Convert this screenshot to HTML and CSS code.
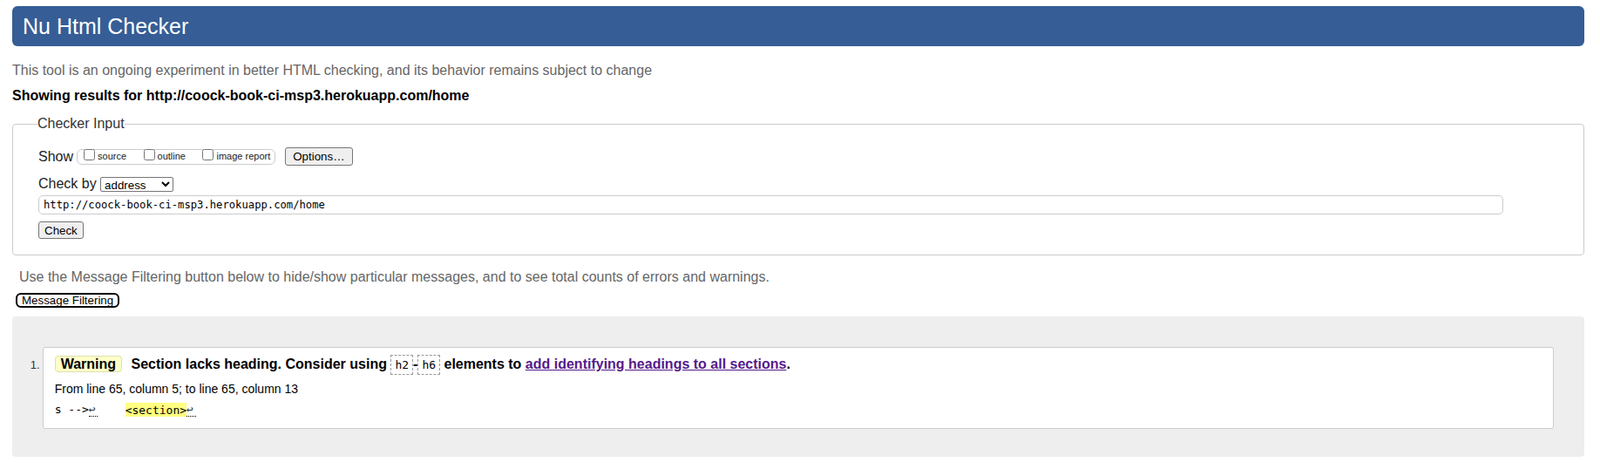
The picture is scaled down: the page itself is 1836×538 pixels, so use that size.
FILE: index.html
```html
<!DOCTYPE html>
<html lang="en">
<head>
<meta charset="utf-8">
<title>Nu Html Checker</title>
<link rel="stylesheet" href="styles.css">
</head>
<body>
<h1 class="title">Nu Html Checker</h1>
<p class="intro">This tool is an ongoing experiment in better HTML checking, and its behavior remains subject to change</p>
<p class="showing">Showing results for http://coock-book-ci-msp3.herokuapp.com/home</p>
<form class="checker">
  <fieldset class="checker-input">
    <legend class="legend">Checker Input</legend>
    <div class="row row-show">
      <span class="label">Show</span>
      <span class="show-box">
        <label class="opt"><input type="checkbox" class="cb">source</label>
        <label class="opt"><input type="checkbox" class="cb">outline</label>
        <label class="opt opt-last"><input type="checkbox" class="cb">image report</label>
      </span>
      <button type="button" class="btn btn-options">Options…</button>
    </div>
    <div class="row row-by">
      <span class="label">Check by</span>
      <select class="select"><option>address</option><option>file upload</option><option>text input</option></select>
    </div>
    <input class="url" type="text" value="http://coock-book-ci-msp3.herokuapp.com/home">
    <button type="button" class="btn btn-check">Check</button>
  </fieldset>
</form>
<p class="filter-note">Use the Message Filtering button below to hide/show particular messages, and to see total counts of errors and warnings.</p>
<button type="button" class="btn-filter">Message Filtering</button>
<div class="results">
  <ol class="messages">
    <li class="msg">
      <p class="msg-line"><strong class="badge">Warning</strong> <span class="msg-text">Section lacks heading. Consider using <code class="tag">h2</code>-<code class="tag">h6</code> elements to <a class="link" href="#">add identifying headings to all sections</a>.</span></p>
      <p class="loc">From line 65, column 5; to line 65, column 13</p>
      <p class="extract"><code class="code">s --&gt;<span class="lf">↩</span>    <span class="hl">&lt;section&gt;</span><span class="lf">↩</span></code></p>
    </li>
  </ol>
</div>
</body>
</html>
```

FILE: styles.css
```css
* { box-sizing: border-box; }
html { background: #fff; }
body {
  margin: 0;
  padding: 7px 18px 0 14px;
  font-family: "Liberation Sans", Arial, sans-serif;
  color: #000;
}
.title {
  margin: 0;
  height: 46px;
  line-height: 46px;
  padding: 0 12px;
  background: #365d95;
  color: #fff;
  font-size: 25px;
  font-weight: normal;
  border-radius: 6px;
}
.intro {
  margin: 18.5px 0 0;
  font-size: 16px;
  line-height: 18.4px;
  color: #666;
}
.showing {
  margin: 10.6px 0 0;
  font-size: 16px;
  line-height: 18.4px;
  font-weight: bold;
}
.checker { margin: 13.9px 0 0; }
.checker-input {
  margin: 0;
  min-width: 0;
  padding: 0 28px 18px;
  border: 1px solid #ccc;
  border-radius: 4px;
}
.legend {
  padding: 0;
  font-size: 16px;
  line-height: 18.4px;
  color: #333;
}
.row { display: flex; align-items: center; padding-left: 1px; }
.row-show { margin-top: 18px; height: 21px; }
.row-by { margin-top: 12px; height: 18.4px; }
.label { font-size: 16px; line-height: 18.4px; color: #222; }
.show-box {
  display: flex;
  align-items: center;
  margin-left: 4px;
  height: 18.3px;
  padding: 0 5px 0 3px;
  border: 1px solid #ccc;
  border-radius: 6px;
}
.opt {
  display: flex;
  align-items: center;
  margin-right: 15.5px;
  font-size: 11px;
  line-height: 12.6px;
  color: #222;
}
.opt-last { margin-right: 0; }
.cb { width: 13px; height: 13px; margin: -5px 3px 0 4px; }
.btn {
  font-family: "Liberation Sans", Arial, sans-serif;
  font-size: 13.333px;
  color: #000;
  background: #efefef;
  border: 1px solid #767676;
  border-radius: 3px;
  padding: 0 6px;
}
.btn-options { margin-left: 11px; height: 21px; padding: 0 8px; }
.select {
  margin-left: 4.4px;
  width: 84px;
  height: 17.5px;
  font-family: "Liberation Sans", Arial, sans-serif;
  font-size: 13.333px;
  color: #000;
  background: #fff;
  border: 1px solid #767676;
  border-radius: 2px;
}
.url {
  display: block;
  margin: 3.7px 0 0 1px;
  width: calc(100% - 65px);
  height: 21.4px;
  padding: 0 5px;
  border: 1px solid #ccc;
  border-radius: 5px;
  font-family: "DejaVu Sans Mono", monospace;
  font-size: 12.2px;
  color: #000;
}
.btn-check { display: block; margin: 8.3px 0 0 1px; height: 20.3px; }
.filter-note {
  margin: 15.6px 0 0 8px;
  font-size: 16px;
  line-height: 18.4px;
  color: #666;
}
.btn-filter {
  display: block;
  margin: 8.5px 0 0 4px;
  height: 17.6px;
  padding: 0 5px;
  background: #fff;
  border: 2px solid #000;
  border-radius: 6px;
  font-family: "Liberation Sans", Arial, sans-serif;
  font-size: 13.333px;
  line-height: 13.6px;
  color: #000;
}
.results {
  margin-top: 9.4px;
  background: #eee;
  border-radius: 4px;
  padding: 34.8px 35.5px 32.6px 35.3px;
}
.messages {
  margin: 0;
  padding: 0;
  list-style: decimal outside;
}
.msg {
  font-size: 13px;
  color: #333;
  background: #fff;
  border: 1px solid #ccc;
  border-radius: 3px;
  padding: 9.5px 12.4px 12.2px;
}
.msg-line {
  margin: 0;
  font-size: 16px;
  line-height: 20px;
  font-weight: bold;
  color: #000;
}
.badge {
  padding: 0 6px;
  background: #ffffc8;
  border: 1px solid #e0e0b0;
  border-radius: 4px;
  margin-right: 6px;
}
.tag {
  font-family: "DejaVu Sans Mono", monospace;
  font-size: 13px;
  font-weight: normal;
  padding: 3.3px 4px;
  border: 1px dashed #999;
}
.link { color: #551a8b; text-decoration: underline; }
.loc {
  margin: 9.2px 0 0;
  font-size: 14px;
  line-height: 16.1px;
  color: #000;
}
.extract {
  margin: 7px 0 0;
  line-height: 17px;
  color: #000;
}
.code {
  font-family: "DejaVu Sans Mono", monospace;
  font-size: 13px;
  white-space: pre;
}
.hl { background: #ffff80; padding: 0.5px 0; }
.lf {
  display: inline-block;
  width: 10.5px;
  line-height: 13px;
  padding-bottom: 1px;
  color: #333;
  border-bottom: 1px dotted #000;
}
```
